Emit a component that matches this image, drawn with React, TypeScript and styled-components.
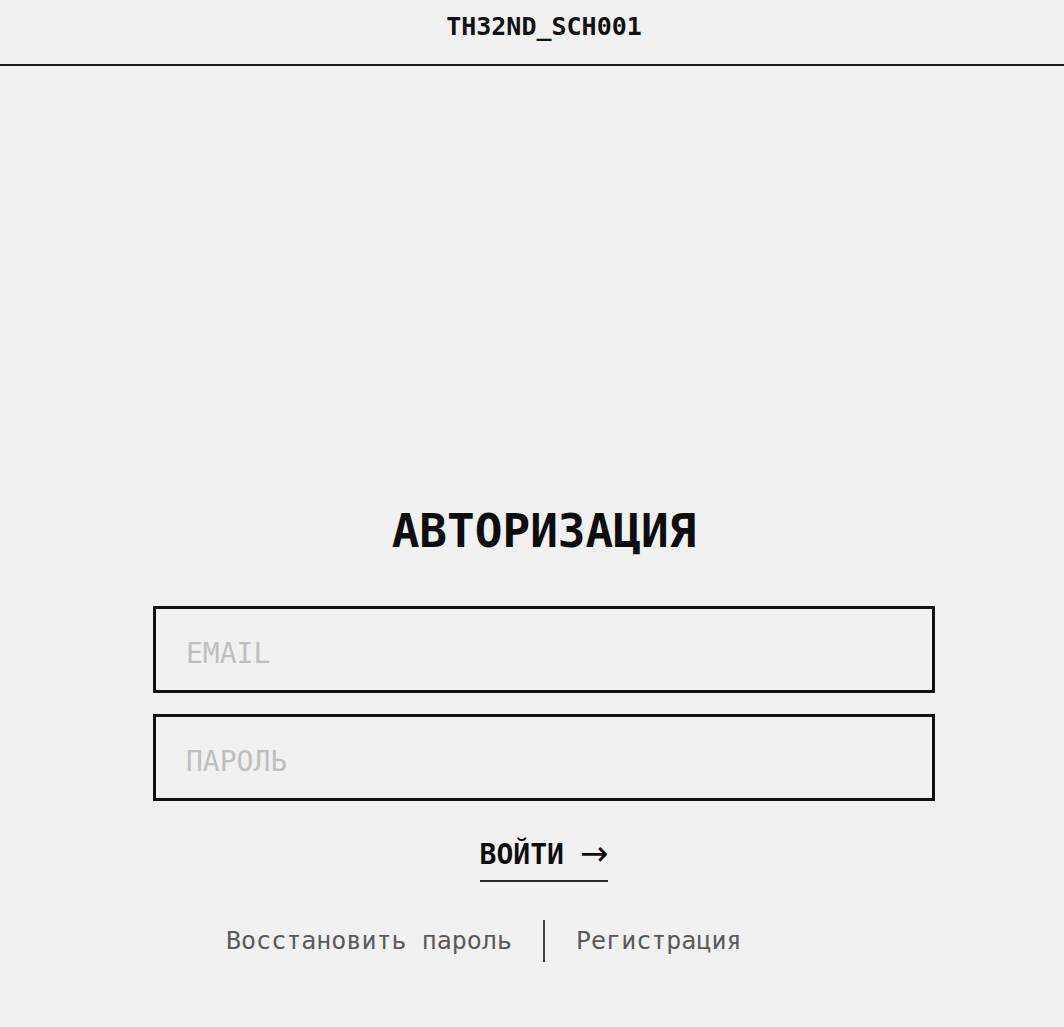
import React from 'react';
import styled, { createGlobalStyle } from 'styled-components';

const GlobalStyle = createGlobalStyle`
  html, body {
    margin: 0;
    padding: 0;
    background: #f1f1f1;
  }
  body {
    font-family: "DejaVu Sans Mono", "Liberation Mono", monospace;
    color: #111;
  }
`;

const Page = styled.div`
  display: flex;
  flex-direction: column;
  width: 100vw;
  min-height: 100vh;
  background: #f1f1f1;
`;

const Header = styled.header`
  display: flex;
  justify-content: center;
  align-items: flex-start;
  height: 66px;
  padding: 14px 0 0 24px;
  box-sizing: border-box;
  border-bottom: 2px solid #1c1c1c;
  font-size: 25px;
  font-weight: bold;
  line-height: 1;
  color: #111;
`;

const Main = styled.main`
  display: flex;
  flex-direction: column;
  align-items: center;
  padding: 442px 0 0 24px;
`;

const Title = styled.h1`
  margin: 0;
  font-size: 46px;
  font-weight: bold;
  line-height: 1;
  color: #0d0d0d;
`;

const Form = styled.form`
  display: flex;
  flex-direction: column;
  align-items: center;
  gap: 21px;
  width: 782px;
  margin-top: 52px;
`;

const Input = styled.input`
  width: 100%;
  height: 87px;
  box-sizing: border-box;
  padding: 8px 30px 0;
  border: 3px solid #111;
  background: #f1f1f1;
  font-family: "DejaVu Sans Mono", "Liberation Mono", monospace;
  font-size: 28px;
  color: #111;
  outline: none;

  &::placeholder {
    color: #bfbfbf;
  }
`;

const Submit = styled.button`
  display: flex;
  align-items: center;
  gap: 16px;
  margin-top: 16px;
  padding: 0 0 8px;
  border: none;
  border-bottom: 2px solid #2a2a2a;
  background: transparent;
  font-family: "DejaVu Sans Mono", "Liberation Mono", monospace;
  font-size: 28px;
  font-weight: bold;
  line-height: 1.2;
  color: #0d0d0d;
  cursor: pointer;
`;

const Arrow = styled.span`
  font-family: "DejaVu Sans", sans-serif;
  font-size: 34px;
  font-weight: normal;
  line-height: 1;
  margin-top: -4px;
`;

const Links = styled.div`
  display: grid;
  grid-template-columns: 1fr auto 1fr;
  align-items: center;
  column-gap: 31px;
  width: 782px;
  margin-top: 38px;
`;

const LinkText = styled.a<{ $side: 'left' | 'right' }>`
  justify-self: ${(p) => (p.$side === 'left' ? 'end' : 'start')};
  font-size: 25px;
  color: #5a5a5a;
  text-decoration: none;
  white-space: pre;
`;

const Divider = styled.span`
  width: 2px;
  height: 42px;
  background: #444;
`;

function App() {
  return (
    <Page>
      <GlobalStyle />
      <Header>TH32ND_SCH001</Header>
      <Main>
        <Title>АВТОРИЗАЦИЯ</Title>
        <Form onSubmit={(e) => e.preventDefault()}>
          <Input type="email" placeholder="EMAIL" />
          <Input type="password" placeholder="ПАРОЛЬ" />
          <Submit type="submit">
            ВОЙТИ <Arrow>→</Arrow>
          </Submit>
        </Form>
        <Links>
          <LinkText $side="left" href="#">Восстановить пароль</LinkText>
          <Divider />
          <LinkText $side="right" href="#">Регистрация</LinkText>
        </Links>
      </Main>
    </Page>
  );
}

export default App;
